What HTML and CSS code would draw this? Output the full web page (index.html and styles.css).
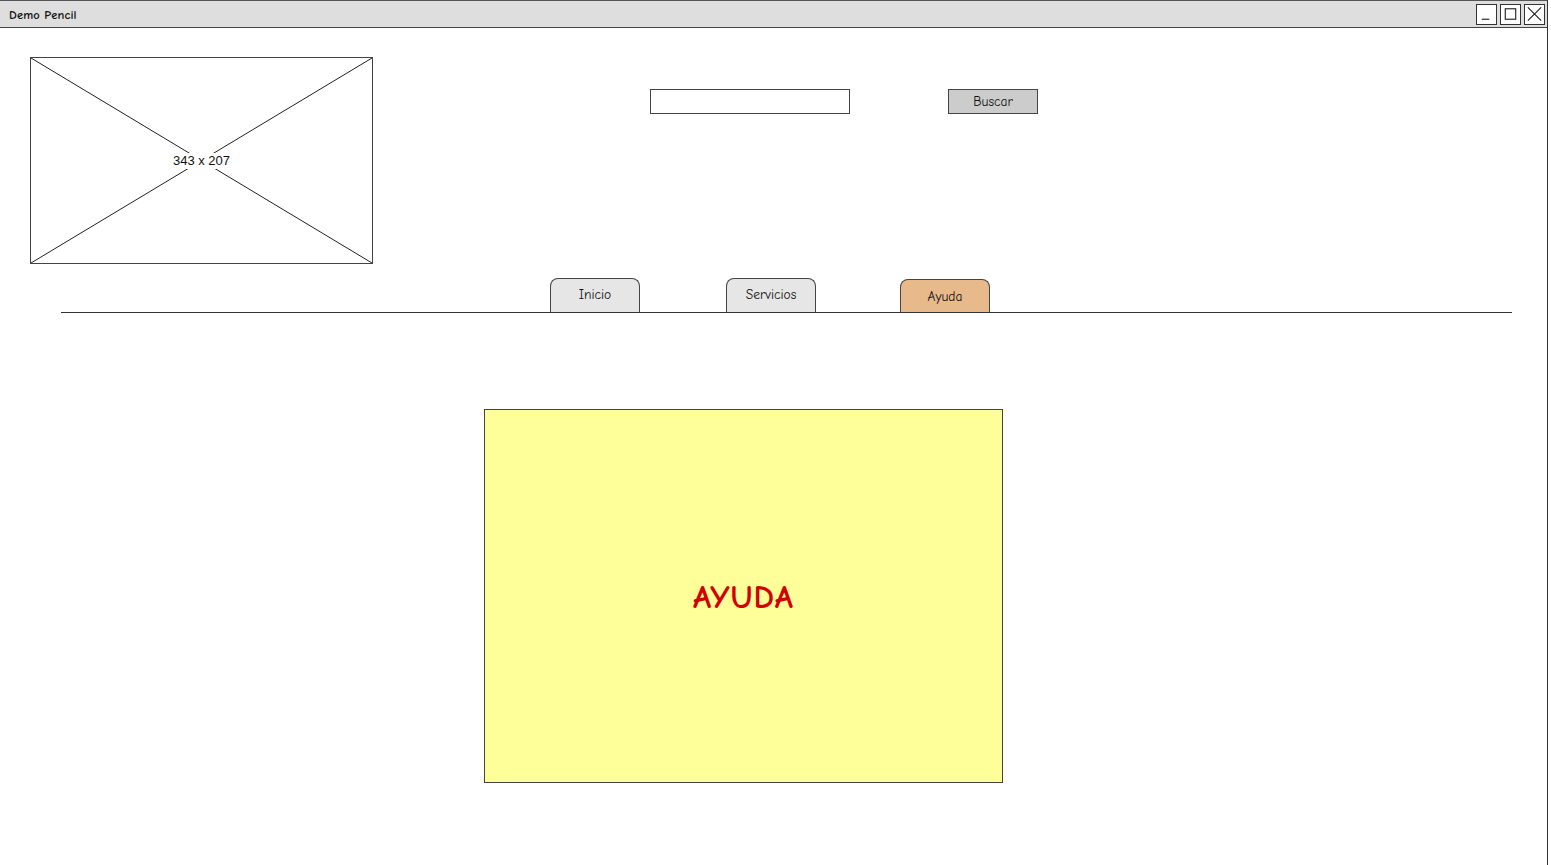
FILE: index.html
```html
<!DOCTYPE html>
<html lang="es">
<head>
<meta charset="utf-8">
<title>Demo Pencil</title>
<link rel="stylesheet" href="styles.css">
</head>
<body>
<div class="window">
  <div class="titlebar">
    <span class="title">Demo Pencil</span>
    <div class="winbtns">
      <span class="winbtn"><svg width="20" height="20" viewBox="0 0 20 20"><path d="M5 15.5 H13" stroke="#222" stroke-width="1.2" fill="none"/></svg></span>
      <span class="winbtn"><svg width="20" height="20" viewBox="0 0 20 20"><rect x="4.5" y="4.5" width="11" height="11" stroke="#222" stroke-width="1.2" fill="none"/></svg></span>
      <span class="winbtn"><svg width="20" height="20" viewBox="0 0 20 20"><path d="M3 3 L17 17 M17 3 L3 17" stroke="#222" stroke-width="1.2" fill="none"/></svg></span>
    </div>
  </div>
  <div class="content">
    <div class="header">
      <div class="placeholder">
        <svg class="cross" width="341" height="205" viewBox="0 0 341 205"><path d="M0 0 L341 205 M341 0 L0 205" stroke="#222" stroke-width="1" fill="none"/></svg>
        <span class="ph-label">343 x 207</span>
      </div>
      <div class="search">
        <input class="search-input" type="text">
        <button class="search-btn">Buscar</button>
      </div>
    </div>
    <div class="tabs">
      <div class="tab">Inicio</div>
      <div class="tab">Servicios</div>
      <div class="tab active">Ayuda</div>
    </div>
    <div class="panel">
      <span class="panel-text">AYUDA</span>
    </div>
  </div>
</div>
</body>
</html>
```
FILE: styles.css
```css
html, body {
  margin: 0;
  padding: 0;
  background: #ffffff;
}
body {
  font-family: "Comic Sans MS", "Comic Neue", "DejaVu Sans", sans-serif;
  color: #111;
}
.window {
  width: 1548px;
  height: 865px;
  border-right: 1px solid #333;
  box-sizing: border-box;
  overflow: hidden;
}
.titlebar {
  height: 28px;
  box-sizing: border-box;
  background: #dedede;
  border-top: 1px solid #555;
  border-bottom: 1px solid #444;
  display: flex;
  align-items: center;
  justify-content: space-between;
  padding-left: 9px;
  padding-right: 2px;
}
.title {
  font-size: 12.5px;
  font-weight: bold;
  letter-spacing: 0.1px;
  padding-top: 1px;
}
.winbtns {
  display: flex;
  gap: 3px;
}
.winbtn {
  width: 21px;
  height: 21px;
  box-sizing: border-box;
  border: 1px solid #333;
  background: #fff;
  display: flex;
  align-items: center;
  justify-content: center;
}
.winbtn svg { display: block; }
.content {
  padding-top: 29px;
}
.header {
  display: flex;
  align-items: flex-start;
  padding-left: 30px;
}
.placeholder {
  position: relative;
  width: 343px;
  height: 207px;
  box-sizing: border-box;
  border: 1px solid #444;
  display: flex;
  align-items: center;
  justify-content: center;
}
.cross {
  position: absolute;
  left: 0;
  top: 0;
}
.ph-label {
  position: relative;
  background: #fff;
  font-family: "Liberation Sans", Arial, sans-serif;
  font-size: 13px;
  padding: 0 3px;
  line-height: 16px;
}
.search {
  display: flex;
  margin-left: 277px;
  margin-top: 32px;
  gap: 98px;
}
.search-input {
  width: 200px;
  height: 25px;
  box-sizing: border-box;
  border: 1px solid #444;
  background: #fff;
  margin: 0;
  padding: 0;
}
.search-btn {
  width: 90px;
  height: 25px;
  box-sizing: border-box;
  border: 1px solid #444;
  background: #cccccc;
  font-family: inherit;
  font-size: 13.5px;
  color: #111;
  margin: 0;
  padding: 0;
}
.tabs {
  display: flex;
  margin-left: 61px;
  margin-top: 14px;
  width: 1451px;
  border-bottom: 1px solid #333;
  padding-left: 489px;
  box-sizing: border-box;
  gap: 86px;
}
.tab {
  width: 90px;
  height: 34px;
  box-sizing: border-box;
  border: 1px solid #444;
  border-bottom: none;
  border-radius: 8px 8px 0 0;
  background: #e6e6e6;
  font-size: 13.5px;
  display: flex;
  align-items: center;
  justify-content: center;
  padding-bottom: 2px;
}
.tab + .tab.active {
  margin-left: -2px;
}
.tab.active {
  background: #e8b98a;
  padding-bottom: 0;
  height: 33px;
  margin-top: 1px;
}
.panel {
  margin-left: 484px;
  margin-top: 96px;
  width: 519px;
  height: 374px;
  box-sizing: border-box;
  border: 1px solid #444;
  background: #ffff99;
  display: flex;
  align-items: center;
  justify-content: center;
}
.panel-text {
  color: #d40000;
  font-size: 33px;
  font-weight: bold;
  letter-spacing: 1px;
  padding-top: 2px;
}
```
